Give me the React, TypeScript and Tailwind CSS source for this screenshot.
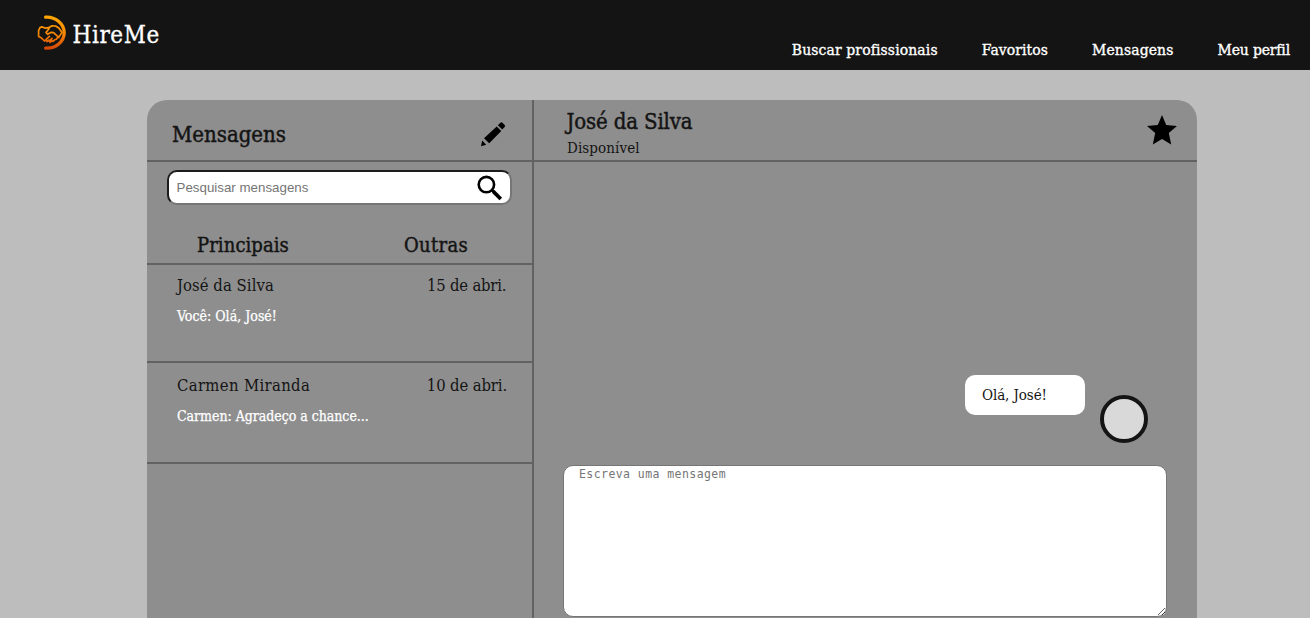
import React from "react";

const serif = "font-['DejaVu_Serif_Condensed','DejaVu_Serif',serif]";

function Logo() {
  return (
    <svg width="30" height="36" viewBox="0 0 30 36" fill="none">
      <defs>
        <linearGradient id="flame" x1="0" y1="0" x2="0" y2="36" gradientUnits="userSpaceOnUse">
          <stop offset="0" stopColor="#ffa800" />
          <stop offset="0.5" stopColor="#f98a05" />
          <stop offset="1" stopColor="#cf3d05" />
        </linearGradient>
      </defs>
      <g stroke="url(#flame)" strokeLinecap="round" strokeLinejoin="round">
        <path d="M8.6 2.2C18 1.5 27.2 8.6 27.2 17.8S18 34 8.6 33.1" strokeWidth="3.3" />
        <path
          d="M3 12.6 1.6 15.5v6l2.6 1.3 3.3 3.2 1.6-1.4 1 2 1.7-1.4 1.3 2.2 1.9-1.7 1 .7 1.6-1.6 1.8-.6 1.2-1.7 2-1.5 2.4-3.6-3.2-4.4-3.2-2-4-.1-3 1.8-3 .5-3.7-1.3zM12 13.7l-3 3.8 1.6 1.8 3.6-2 2.4.4 5.3 5M12.4 21.4l-3.2 3M15 23.4l-2.8 2.8"
          strokeWidth="1.7"
        />
      </g>
    </svg>
  );
}

function Conversation(props: {
  name: string;
  nameTracking: string;
  date: string;
  dateTracking: string;
  preview: string;
  previewTracking: string;
  height: string;
}) {
  return (
    <li className={`${props.height} box-border border-b-2 border-[#626262] pr-[25px] pl-[30px]`}>
      <div className="flex text-[16.5px] leading-6 text-[#141414]">
        <span className={`w-[250px] ${props.nameTracking}`}>{props.name}</span>
        <span className={`whitespace-nowrap ${props.dateTracking}`}>{props.date}</span>
      </div>
      <p className={`mt-2 text-[14px] leading-5 text-white [-webkit-text-stroke:0.25px] ${props.previewTracking}`}>
        {props.preview}
      </p>
    </li>
  );
}

export default function App() {
  return (
    <div className={`h-[618px] overflow-hidden bg-[#bdbdbd] text-[#141414] ${serif}`}>
      <header className="flex h-[70px] justify-between bg-[#141414] text-white">
        <div className="flex pt-[15px] pl-[37px]">
          <Logo />
          <span className="mt-px ml-[5.5px] text-[24px] leading-[38px] tracking-[0.6px] [-webkit-text-stroke:0.3px]">HireMe</span>
        </div>
        <nav className="flex gap-[44px] pt-[38px] pr-5 text-[15.5px] leading-6 [-webkit-text-stroke:0.35px]">
          <a className="tracking-[0.13px]">Buscar profissionais</a>
          <a className="tracking-[0.1px]">Favoritos</a>
          <a className="tracking-[0.13px]">Mensagens</a>
          <a className="tracking-[-0.14px]">Meu perfil</a>
        </nav>
      </header>

      <main className="mt-[30px] ml-[147px] flex h-[518px] w-[1050px] overflow-hidden rounded-t-[20px] bg-[#8e8e8e]">
        <aside className="w-[387px] shrink-0 border-r-2 border-[#626262]">
          <div className="flex h-[62px] items-start justify-between border-b-2 border-[#626262] pl-[25px] pr-[25px]">
            <h1 className="pt-[19px] text-[22px] leading-8 [-webkit-text-stroke:0.45px]">Mensagens</h1>
            <svg className="mt-[19px]" width="30" height="30" viewBox="0 0 30 30">
              <path d="M20.9 6.2 23.4 3.7q1-.9 2 0l2.3 2.4q.9 1 0 1.9l-2.5 2.5zM19.7 7.5l4.6 4.5L12.2 24.2 7 19.3zM5.2 21.6 9.2 25.8l-5.2 1.4z" fill="#000" />
            </svg>
          </div>
          <div className="mt-2 ml-5 flex h-[35px] w-[345px] items-center justify-between rounded-[10px] border-2 border-t-[#1c1c1c] border-r-[#767676] border-b-[#767676] border-l-[#1c1c1c] bg-white pr-[6px] pl-[7.5px]">
            <input
              placeholder="Pesquisar mensagens"
              className="w-[250px] bg-transparent font-['Liberation_Sans',sans-serif] text-[13.333px] outline-none placeholder:text-[#757575]"
            />
            <svg width="28" height="28" viewBox="0 0 28 28" fill="none" stroke="#000">
              <circle cx="10.4" cy="10.6" r="7.7" strokeWidth="2.6" />
              <path d="m16 16 1.8 1.8" strokeWidth="2.5" />
              <path d="m17.2 17.4 7.6 7.6" strokeWidth="3.7" />
            </svg>
          </div>
          <div className="flex h-[60px] border-b-2 border-[#626262] pt-[26px] pl-[50px] text-[20px] leading-7 [-webkit-text-stroke:0.45px]">
            <h2 className="w-[207px] tracking-[0.08px]">Principais</h2>
            <h2 className="tracking-[0.3px]">Outras</h2>
          </div>
          <ul>
            <Conversation
              name="José da Silva" nameTracking="tracking-[0.07px]"
              date="15 de abri." dateTracking="tracking-[-0.2px]"
              preview="Você: Olá, José!" previewTracking="tracking-[0.02px]"
              height="h-[98px] pt-[9px]"
            />
            <Conversation
              name="Carmen Miranda" nameTracking="tracking-[0.35px]"
              date="10 de abri." dateTracking="tracking-[-0.12px]"
              preview="Carmen: Agradeço a chance..." previewTracking="tracking-[-0.03px]"
              height="h-[101px] pt-[11px]"
            />
          </ul>
        </aside>

        <section className="flex-1">
          <div className="flex h-[62px] justify-between border-b-2 border-[#626262] pr-5 pl-8">
            <div>
              <h2 className="mt-[8px] pl-[0.5px] text-[22px] leading-[28px] tracking-[-0.15px] [-webkit-text-stroke:0.45px]">José da Silva</h2>
              <p className="mt-[2px] pl-px text-[15px] leading-5 tracking-[0.1px]">Disponível</p>
            </div>
            <svg className="mt-[15px]" width="30" height="30" viewBox="0 0 30 30">
              <path d="m15 0 4.2 10 10.8 1-8.2 7.1L24.2 29.5 15 24 5.8 29.5 8.2 18.1 0 11l10.8-1z" fill="#000" />
            </svg>
          </div>
          <div className="flex h-[303px] items-start justify-end gap-[15px] pt-[213px] pr-[49px]">
            <div className="h-10 w-[120px] rounded-[10px] bg-white pl-[17px] text-[15px] leading-10 tracking-[-0.1px]">Olá, José!</div>
            <div className="mt-5 h-12 w-12 rounded-full border-4 border-[#141414] bg-[#d9d9d9]" />
          </div>
          <textarea
            placeholder="Escreva uma mensagem"
            className="ml-[29px] block h-[152px] w-[604px] resize rounded-[10px] border border-[#767676] bg-white px-[15px] pt-px font-['DejaVu_Sans_Mono',monospace] text-[11.5px] leading-[15px] tracking-[0.43px] outline-none placeholder:text-[#757575]"
          />
        </section>
      </main>
    </div>
  );
}
